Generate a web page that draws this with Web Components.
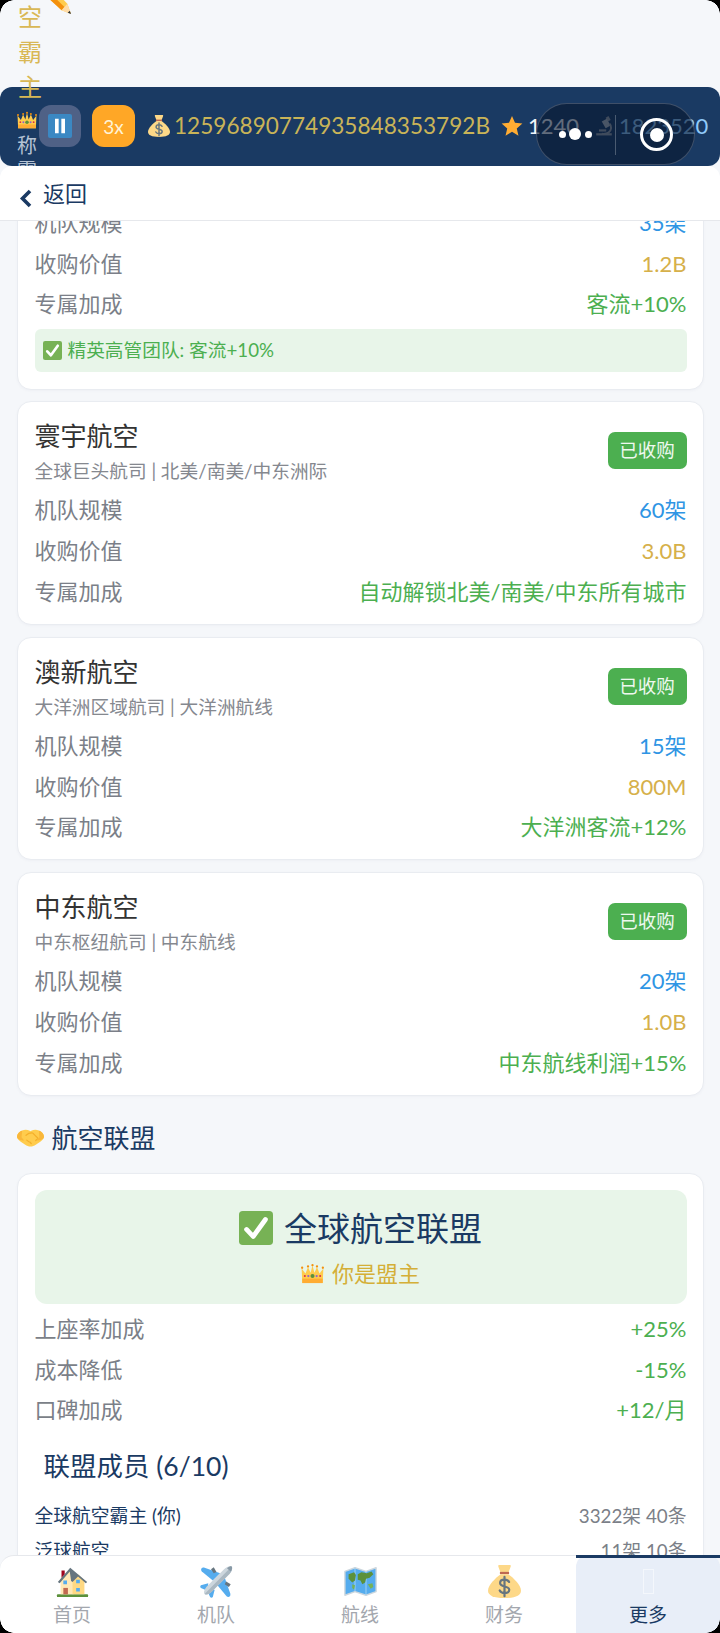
<!DOCTYPE html>
<html lang="zh">
<head>
<meta charset="utf-8">
<title>航空联盟</title>
<style>
html,body{margin:0;padding:0;background:#f5f7fa}
body{font-family:Lato,"Noto Sans CJK SC","Noto Sans",sans-serif;width:720px;height:1633px;overflow:hidden}
</style>
</head>
<body>
<app-screen>
  <status-bar slot="status"></status-bar>
  <back-bar slot="back" label="返回"></back-bar>
  <corp-card style="margin-top:-35.300px">
    <stat-row label="机队规模" value="35架" tone="blue"></stat-row>
    <stat-row label="收购价值" value="1.2B" tone="gold"></stat-row>
    <stat-row label="专属加成" value="客流+10%" tone="green"></stat-row>
    <perk-note>精英高管团队: 客流+10%</perk-note>
  </corp-card>
  <corp-card name="寰宇航空" sub="全球巨头航司 | 北美/南美/中东洲际" badge="已收购">
    <stat-row label="机队规模" value="60架" tone="blue"></stat-row>
    <stat-row label="收购价值" value="3.0B" tone="gold"></stat-row>
    <stat-row label="专属加成" value="自动解锁北美/南美/中东所有城市" tone="green"></stat-row>
  </corp-card>
  <corp-card name="澳新航空" sub="大洋洲区域航司 | 大洋洲航线" badge="已收购">
    <stat-row label="机队规模" value="15架" tone="blue"></stat-row>
    <stat-row label="收购价值" value="800M" tone="gold"></stat-row>
    <stat-row label="专属加成" value="大洋洲客流+12%" tone="green"></stat-row>
  </corp-card>
  <corp-card name="中东航空" sub="中东枢纽航司 | 中东航线" badge="已收购">
    <stat-row label="机队规模" value="20架" tone="blue"></stat-row>
    <stat-row label="收购价值" value="1.0B" tone="gold"></stat-row>
    <stat-row label="专属加成" value="中东航线利润+15%" tone="green"></stat-row>
  </corp-card>
  <section-title icon="handshake">航空联盟</section-title>
  <corp-card>
    <alliance-hero name="全球航空联盟" role="你是盟主"></alliance-hero>
    <stat-row label="上座率加成" value="+25%" tone="green"></stat-row>
    <stat-row label="成本降低" value="-15%" tone="green"></stat-row>
    <stat-row label="口碑加成" value="+12/月" tone="green"></stat-row>
    <member-list title="联盟成员 (6/10)">
      <member-row name="全球航空霸主 (你)" info="3322架 40条"></member-row>
      <member-row name="泛球航空" info="11架 10条"></member-row>
    </member-list>
  </corp-card>
  <tab-bar slot="tabs">
    <tab-item icon="house" label="首页"></tab-item>
    <tab-item icon="plane" label="机队"></tab-item>
    <tab-item icon="map" label="航线"></tab-item>
    <tab-item icon="money" label="财务"></tab-item>
    <tab-item label="更多" active></tab-item>
  </tab-bar>
</app-screen>

<script>
const ICONS = {
  pencil:`<path d="M8 0 L0 8 L25 31 L35 35 L31 24 Z" fill="#FFCC4D"/><path d="M0 8 L25 31 L28 27.500 L4 4Z" fill="#F4900C"/><path d="M25 31 L35 35 L31 24Z" fill="#FFDCA8"/><path d="M31.500 33.600 L35 35 L33.600 31.500Z" fill="#292F33"/>`,
  crown:`<path d="M1 10 L7 18 L11 8 L15 17 L18 5 L21 17 L25 8 L29 18 L35 10 L34 33 H2Z" fill="#FFCC4D"/><path d="M2 26h32v7H2z" fill="#FFAC33"/><circle cx="1.800" cy="9" r="1.800" fill="#F4900C"/><circle cx="34.200" cy="9" r="1.800" fill="#F4900C"/><circle cx="11" cy="7" r="1.800" fill="#F4900C"/><circle cx="25" cy="7" r="1.800" fill="#F4900C"/><circle cx="18" cy="5" r="1.800" fill="#F4900C"/><circle cx="18" cy="22" r="3.200" fill="#5C913B"/><circle cx="11.500" cy="22" r="1.800" fill="#9266CC"/><circle cx="24.500" cy="22" r="1.800" fill="#9266CC"/><circle cx="6" cy="22" r="1.600" fill="#DD2E44"/><circle cx="30" cy="22" r="1.600" fill="#DD2E44"/>`,
  money:`<path d="M12 0h12c1 0 1 1.500.5 2.500L22 9h-8l-2.500-6.500C11 1 11 0 12 0Z" fill="#FDD888"/><path d="M13 7.500h10v2.500H13z" fill="#BF6952"/><path d="M14 10h8C28 14 36 22 36 28c0 5-6 8-18 8S0 33 0 28c0-6 8-14 14-18Z" fill="#FDD888"/><path d="M23 18.500c-1-1.700-2.800-2.500-5-2.500-2.800 0-4.800 1.400-4.800 3.600 0 5 10 2.600 10 7.400 0 2.100-2.200 3.600-5.200 3.600-2.300 0-4.200-.9-5.200-2.800M18 13v21" fill="none" stroke="#67757F" stroke-width="2.400" stroke-linecap="round"/>`,
  star:`<path d="M18 1.500l4.900 11.300 12.100 1.100-9.200 8 2.800 12L18 27.500 7.400 33.900l2.800-12-9.200-8 12.100-1.100Z" fill="#FFAC33"/>`,
  micro:`<path d="M4 31h28v4H4z" fill="#9aa0a6"/><path d="M21 3l5-3 4 7-5 3Z" fill="#9aa0a6"/><path d="M14 10l9-5 7 12-9 5Z" fill="#b4bac0"/><path d="M28 14c4 4 4 12-2 16-3 2-8 2.500-12 2" fill="none" stroke="#9aa0a6" stroke-width="3.500"/><path d="M9 24h13v4H9z" fill="#9aa0a6"/>`,
  check:`<rect x="0" y="0" width="36" height="36" rx="4" fill="#77B255"/><path d="M8 19.500l7 7.500 13-18" fill="none" stroke="#fff" stroke-width="5" stroke-linecap="round" stroke-linejoin="round"/>`,
  pause:`<rect width="36" height="36" rx="3" fill="#3B88C3"/><path d="M10.500 7h5.500v22h-5.500zM20 7h5.500v22H20z" fill="#fff"/>`,
  handshake:`<path d="M0 17c0-4 3-7 7-8.500 3.500-1.300 7-1 10 .5l1 .5 1-.5c3-1.500 6.500-1.800 10-.5 4 1.500 7 4.500 7 8.500 0 3-3 5-5 6.500l-6 4c-2 1.500-4.500 2.500-7 2.500s-5-1-7-2.500l-6-4C3 22 0 20 0 17Z" fill="#FFCC4D"/><path d="M12 15c3-2.500 6-3.500 9-3l7 7-3 3M17 24l2 2M13 21.500l2.500 2" fill="none" stroke="#F4AF2A" stroke-width="1.600" stroke-linecap="round"/><path d="M0 17c0-4 3-7 7-8.500l-1 9 3.500 4.500C4.500 22 0 20 0 17Z" fill="#F9B73A"/><path d="M36 17c0-4-3-7-7-8.500l1 9-3.500 4.500C31.500 22 36 20 36 17Z" fill="#F9B73A"/>`,
  house:`<rect x="1" y="32" width="34" height="3" rx="1" fill="#5C913B"/><path d="M6 6h3.500v8H6z" fill="#A0041E"/><path d="M5 15L15 5l4 4v23H5Z" fill="#FFE8B6"/><path d="M18 16l6-6 7 7v15H18Z" fill="#FFD983"/><path d="M2 18.500L15.500 3 34 18.500l-1.500 1.500L24 12.500l-6 6-1.500-1L15 7 4 20Z" fill="#66757F"/><path d="M8 25h5v7H8z" fill="#C1694F"/><path d="M8 17h4v4H8zM22 16h4v4h-4zM22 25h4v4h-4z" fill="#55ACEE"/>`,
  plane:`<path d="M22 9L5 3C2 2 0 5 2 7L14 17Z" fill="#55ACEE"/><path d="M27 14L33 31C34 34 31 36 29 34L19 22Z" fill="#55ACEE"/><path d="M9 20L1 22C0 23 0 24 1 25L8 28Z" fill="#55ACEE"/><path d="M16 27L14 35C13 36 12 36 11 35L8 28Z" fill="#55ACEE"/><path d="M12 4.500l3-2 3 5-3 1.500ZM31.500 24l2-3-5-3-1.500 3Z" fill="#66757F"/><path d="M34.500 1.500C36 3 34.500 7.500 31 11L13 29C10 32 7 33 5 31.500 3.500 30 5 26 8 23L26 5C29 2 33 .500 34.500 1.500Z" fill="#CCD6DD"/><path d="M34.500 1.500C36 3 34.500 7.500 31 11L13 29C10 32 7 33 5 31.500Z" fill="#AAB8C2"/><path d="M34.500 1.500C35.500 2.500 35 4.500 33.500 7L29.500 3.500C32 1.500 33.500 1 34.500 1.500Z" fill="#8899A6"/>`,
  map:`<path d="M1 7l11-4 12 4 11-4v26l-11 4-12-4-11 4Z" fill="#55ACEE" stroke="#CCD6DD" stroke-width="1.500" stroke-linejoin="round"/><path d="M12 3v26M24 7v26" stroke="#A6D4F2" stroke-width="1"/><path d="M5 10l6-2 2 3-1 6-3 2-4-4ZM15 10l4-2 6 1 5-2 2 3-4 4-4 1-1 4-3 2-2-4-3-1Z" fill="#5C913B"/><path d="M26 21l5-1 1 4-3 2ZM9 21l3 1-1 5-2-2Z" fill="#77B255"/>`
};
function svg(name,size){return `<svg xmlns="http://www.w3.org/2000/svg" viewBox="0 0 36 36" width="${size}" height="${size}" aria-hidden="true" style="display:block;flex:none">${ICONS[name]||''}</svg>`}

function define(tag, css, html){
  customElements.define(tag, class extends HTMLElement{
    connectedCallback(){
      if(this.shadowRoot) return;
      const r=this.attachShadow({mode:'open'});
      const get=n=>this.getAttribute(n)??'';
      r.innerHTML=`<style>${css}</style>${html(get,this)}`;
    }
  });
}

define('app-screen',`
  :host{display:block;position:relative;width:720px;height:1633px;overflow:hidden;background:#f5f7fa}
  .wrap{display:flex;flex-direction:column;height:100%}
  .sky{height:87px;flex:none}
  .scroll{flex:1;min-height:0;overflow:hidden;padding:0 16.500px;position:relative;z-index:1}
  .top{flex:none;position:relative;z-index:3}
  .tabs{flex:none;position:relative;z-index:3}
  .corner{position:absolute;width:14px;height:14px;z-index:9;pointer-events:none}
  .tl{left:0;top:0;background:radial-gradient(circle at 100% 100%,transparent 13.500px,#000 14px)}
  .tr{right:0;top:0;background:radial-gradient(circle at 0 100%,transparent 13.500px,#000 14px)}
  .bl{left:0;bottom:0;background:radial-gradient(circle at 100% 0,transparent 13.500px,#000 14px)}
  .br{right:0;bottom:0;background:radial-gradient(circle at 0 0,transparent 13.500px,#000 14px)}
`,()=>`<div class="wrap"><div class="sky"></div><div class="top"><slot name="status"></slot><slot name="back"></slot></div>
<div class="scroll"><slot></slot></div><div class="tabs"><slot name="tabs"></slot></div></div>
<i class="corner tl"></i><i class="corner tr"></i><i class="corner bl"></i><i class="corner br"></i>`);

define('status-bar',`
  :host{display:block;position:relative;height:78.500px;background:#1a3a63;border-radius:12px;font-size:22px;line-height:1}
  .row{display:flex;align-items:center;height:100%;padding-left:39px;white-space:nowrap;box-sizing:border-box}
  .btn{width:42px;height:42px;border-radius:12px;flex:none;display:flex;align-items:center;justify-content:center;box-sizing:border-box}
  .pause{background:#4f6186;margin-right:11px}
  .speed{background:#ffa726;color:#fff3d6;font-size:19px;width:43px;margin-right:13px}
  .gold{color:#c9b458;font-size:22.600px;margin-left:4px;margin-right:11px}
  .white{color:#f2f6fa;margin-left:5px;margin-right:15px}
  .blue{color:#90caf9;margin-left:5px}
  .title{position:absolute;left:18px;top:-88.500px;width:24px;height:195px;color:#d9b855;font-size:24px;line-height:35px}
  .title span{display:block;text-align:center}
  .pen{position:absolute;left:38px;top:-105.600px}
  .rank{position:absolute;left:17px;top:23px;width:22px;height:55.500px;overflow:hidden;color:#b4c2d4;font-size:20px;line-height:25px}
  .rank svg{margin-bottom:3px}
  .rank span{display:block}
  .capsule{position:absolute;left:536px;top:16px;width:159px;height:62px;box-sizing:border-box;border-radius:31px;background:rgba(8,22,46,.62);border:1px solid rgba(255,255,255,.2);z-index:2}
  .dot{position:absolute;background:#fff;border-radius:50%}
  .sep{position:absolute;left:78px;top:11px;width:1px;height:40px;background:rgba(255,255,255,.25)}
  .ring{position:absolute;left:103px;top:14px;width:33px;height:33px;box-sizing:border-box;border:3px solid #fff;border-radius:50%}
`,()=>`<div class="title"><span>空</span><span>霸</span><span>主</span></div>
<div class="pen">${svg('pencil',34)}</div>
<div class="rank">${svg('crown',20)}<span>称</span><span>霸</span></div>
<div class="row">
  <div class="btn pause">${svg('pause',24)}</div>
  <div class="btn speed">3x</div>
  ${svg('money',22)}<span class="gold">125968907749358483537​92B</span>
  ${svg('star',22)}<span class="white">1240</span>
  ${svg('micro',20)}<span class="blue">1823520</span>
</div>
<div class="capsule"><i class="dot" style="left:22px;top:27px;width:7px;height:7px"></i><i class="dot" style="left:32px;top:24px;width:12px;height:12px"></i><i class="dot" style="left:48px;top:27px;width:7px;height:7px"></i><i class="sep"></i><i class="ring"></i><i class="dot" style="left:112.500px;top:23.500px;width:14px;height:14px"></i></div>`);

define('back-bar',`
  :host{display:flex;align-items:center;height:55.500px;box-sizing:border-box;background:#fff;border-radius:12px 12px 0 0;border-bottom:1px solid #e6e8ec;padding-left:19px;color:#1a3a63;font-size:22px;line-height:1}
  svg{display:block;margin-right:10px;margin-top:12px}
  span{margin-top:3px}
`,g=>`<svg width="14" height="19" viewBox="0 0 14 19"><path d="M11 2L3.500 9.500 11 17" fill="none" stroke="#1a3a63" stroke-width="3.600" stroke-linecap="butt"/></svg><span>${g('label')}</span>`);

define('corp-card',`
  :host{display:block;box-sizing:border-box;background:#fff;border:1px solid #e9ecf1;border-radius:14px;padding:16px 16px 12px 17px;margin-bottom:11.500px;box-shadow:0 1px 3px rgba(20,40,80,.03)}
  .head{display:flex;justify-content:space-between;align-items:center;height:68px;margin-bottom:4px}
  .name{font-size:26px;line-height:36px;color:#333}
  .sub{font-size:18.700px;line-height:30px;margin-top:2px;color:#85888f}
  .badge{background:#4caf50;color:#eef8ef;font-size:18.500px;line-height:37px;height:37px;width:79px;text-align:center;border-radius:7px;margin-top:-3px}
`,g=>(g('name')?`<div class="head"><div><div class="name">${g('name')}</div><div class="sub">${g('sub')}</div></div><div class="badge">${g('badge')}</div></div>`:'')+`<slot></slot>`);

define('stat-row',`
  :host{display:flex;justify-content:space-between;align-items:center;height:40.650px;font-size:22px;line-height:1;color:#7b7f88;white-space:nowrap}
  .blue{color:#2f95e4}.gold{color:#d6b04a}.green{color:#4caf50}
`,g=>`<span>${g('label')}</span><span class="${g('tone')}">${g('value')}</span>`);

define('perk-note',`
  :host{display:flex;align-items:center;height:43px;margin-top:4px;margin-bottom:5px;background:#e8f5e9;border-radius:6px;padding-left:8px;color:#4caf50;font-size:18.700px;line-height:1}
  svg{margin-right:6px}
`,()=>`${svg('check',19)}<slot></slot>`);

define('section-title',`
  :host{display:flex;align-items:center;height:36px;padding-top:12.500px;margin-bottom:17px;color:#1a3a63;font-size:26px;line-height:36px}
  svg{margin-right:8px}
`,g=>`${svg(g('icon'),27)}<slot></slot>`);

define('alliance-hero',`
  :host{display:block;box-sizing:border-box;height:114px;padding-top:15px;background:#e8f5e9;border-radius:12px;margin-bottom:5px;text-align:center}
  .t{display:flex;justify-content:center;align-items:center;height:46px;font-size:33px;line-height:46px;color:#1a3a63}
  .t svg{margin-right:11px}
  .r{display:flex;justify-content:center;align-items:center;height:30px;margin-top:8px;font-size:22px;line-height:30px;color:#d4af37}
  .r svg{margin-right:8px}
`,g=>`<div class="t">${svg('check',34)}<span>${g('name')}</span></div><div class="r">${svg('crown',23)}<span>${g('role')}</span></div>`);

define('member-list',`
  :host{display:block}
  h3{margin:17px 0 15.500px 9px;font-weight:400;font-size:26.500px;line-height:36px;color:#1a3a63}
`,g=>`<h3>${g('title')}</h3><slot></slot>`);

define('member-row',`
  :host{display:flex;justify-content:space-between;align-items:center;height:35px;font-size:18.800px;line-height:1;white-space:nowrap}
  .n{color:#1a3a63}.i{color:#7b7f88}
`,g=>`<span class="n">${g('name')}</span><span class="i">${g('info')}</span>`);

define('tab-bar',`
  :host{display:flex;height:78px;box-sizing:border-box;background:#fff;border-top:1px solid #e6e8ec;border-radius:14px 14px 0 0}
`,()=>`<slot></slot>`);

define('tab-item',`
  :host{flex:1;display:flex;flex-direction:column;align-items:center;position:relative;box-sizing:border-box;padding-top:8px;color:#a3a7ae;font-size:19px;line-height:1}
  :host([active]){background:#e8eef8;color:#1a3a63;border-radius:12px 12px 0 0;margin-top:-1px;padding-top:9px}
  :host([active])::before{content:"";position:absolute;left:0;right:0;top:0;height:3px;background:#1a3a63}
  .ic{height:34px;margin-bottom:7px;display:flex;align-items:center;justify-content:center}
  .tofu{width:11px;height:25px;box-sizing:border-box;border:1px solid #f4f7fc}
`,g=>`<div class="ic">${g('icon')?svg(g('icon'),33):'<div class="tofu"></div>'}</div><span>${g('label')}</span>`);
</script>
</body>
</html>
